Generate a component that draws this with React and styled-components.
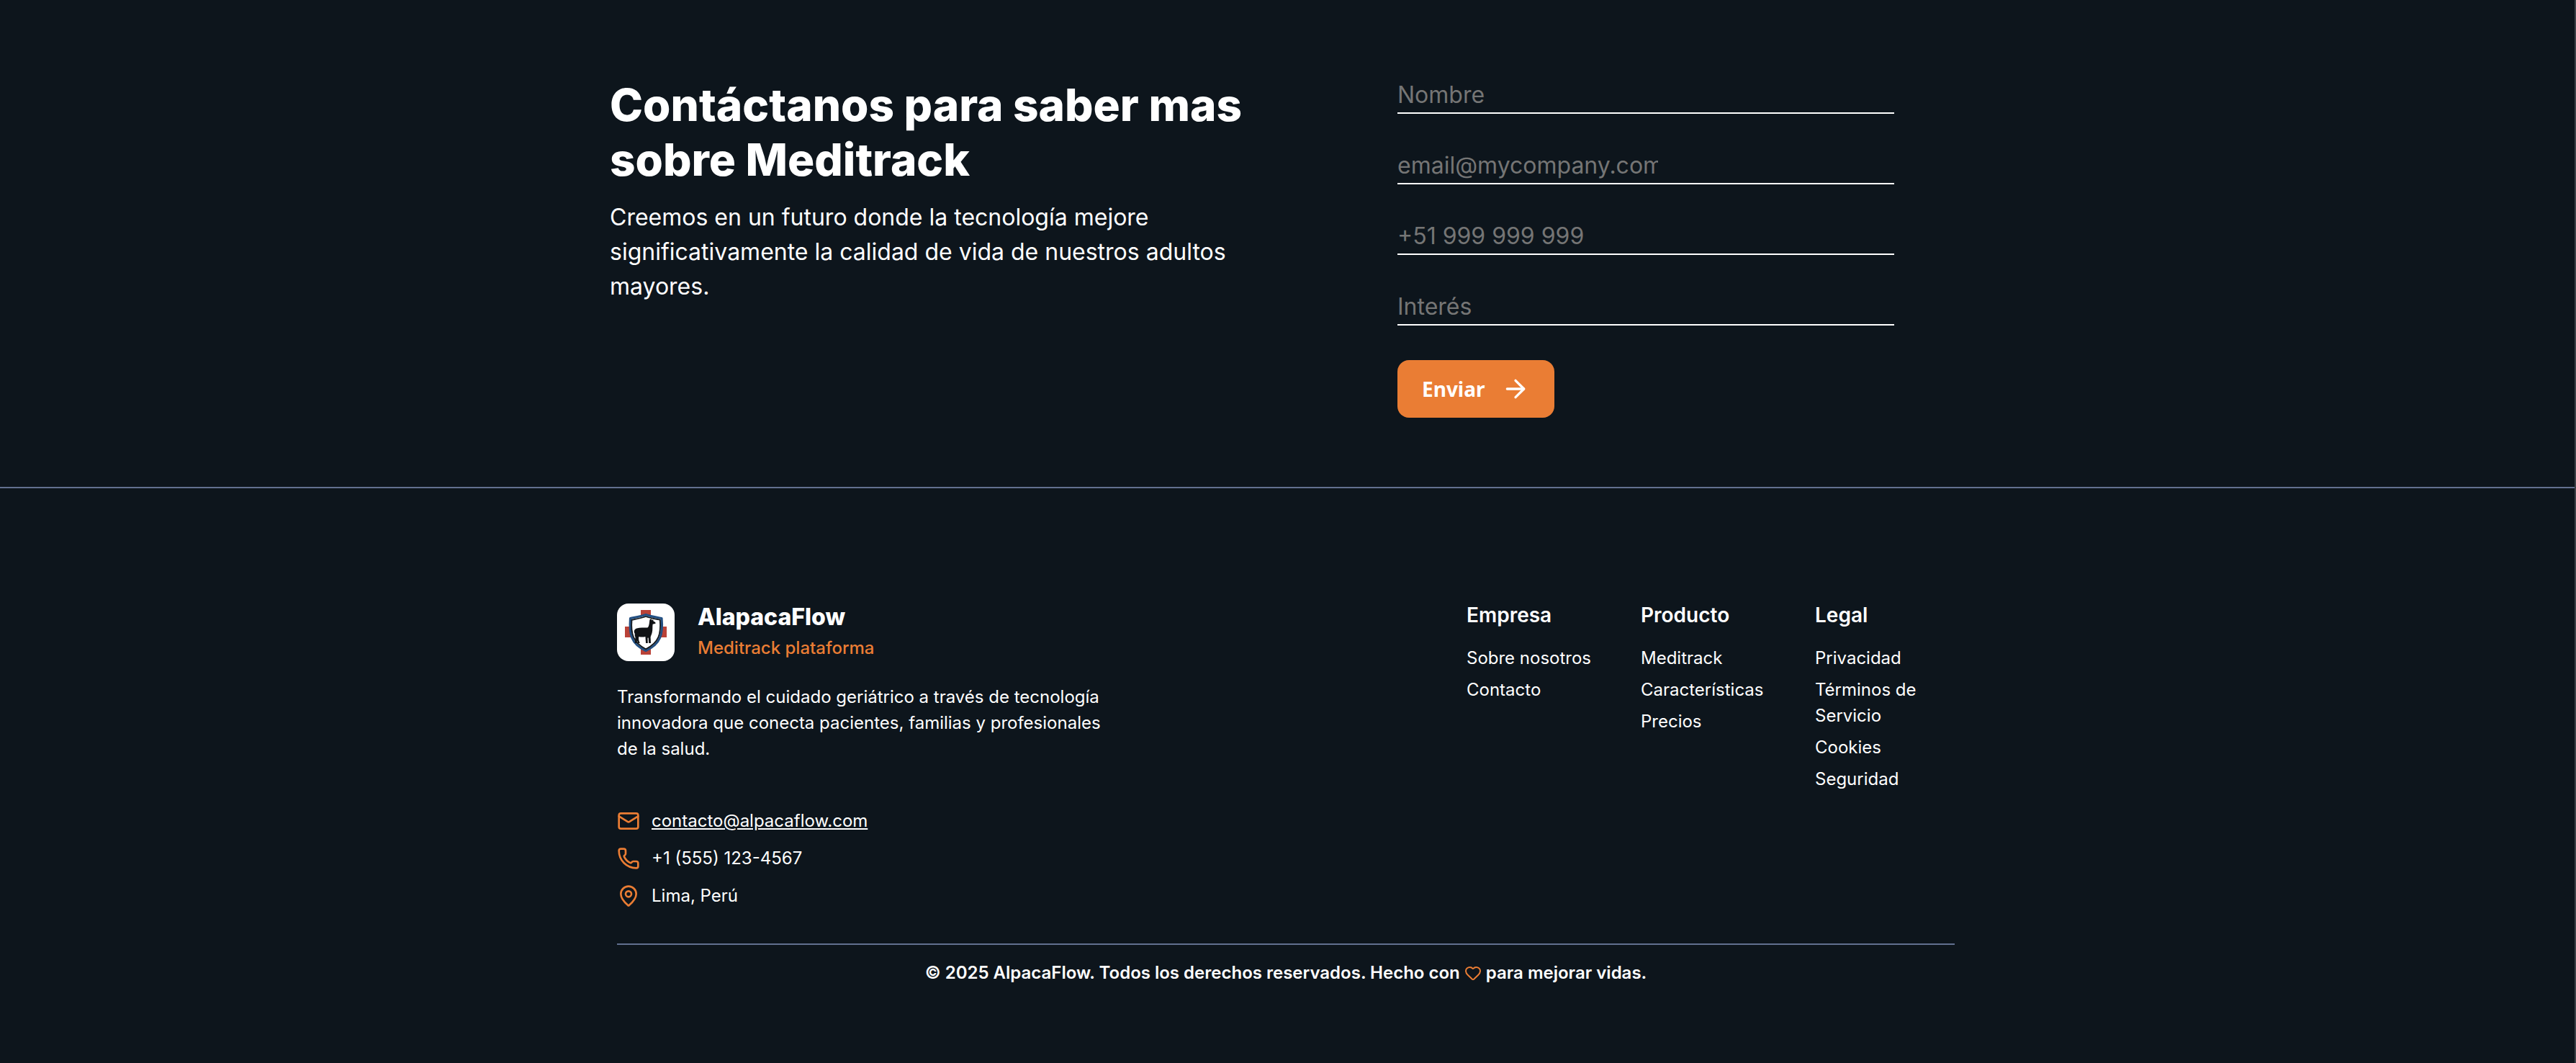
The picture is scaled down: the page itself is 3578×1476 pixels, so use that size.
import React from 'react';
import styled, { createGlobalStyle } from 'styled-components';
import { ArrowRight, Heart, Mail, MapPin, Phone } from 'lucide-react';

const color = {
  bg: '#0d151c',
  text: '#ffffff',
  accent: '#ea7d34',
  line: '#62708f',
  hint: '#757575',
  track: '#3d4248',
};

const GlobalStyle = createGlobalStyle`
  *, *::before, *::after { box-sizing: border-box; }
  body {
    margin: 0;
    background: ${color.bg};
    color: ${color.text};
    font-family: Inter, "Liberation Sans", sans-serif;
  }
`;

const Page = styled.div`
  min-height: 100vh;
  border-right: 2px solid ${color.track};
`;

const Contact = styled.section`
  display: flex;
  justify-content: center;
  gap: 184px;
  padding: 108px 98px 96px 0;
  border-bottom: 2px solid ${color.line};
`;

const Intro = styled.div`
  flex: 0 1 910px;
`;

const Title = styled.h1`
  margin: 0 0 18px;
  font-size: 62px;
  line-height: 76px;
  font-weight: 800;
`;

const Lead = styled.p`
  margin: 0;
  max-width: 880px;
  font-size: 32px;
  line-height: 48px;
`;

const Form = styled.form`
  flex: 0 1 690px;
  display: flex;
  flex-direction: column;
  align-items: flex-start;
  gap: 48px;
`;

const Field = styled.label`
  display: block;
  width: 100%;
  height: 50px;
  border-bottom: 2px solid ${color.text};
`;

const Input = styled.input`
  display: block;
  width: 362px;
  height: 48px;
  padding: 0;
  border: 0;
  outline: 0;
  background: transparent;
  color: ${color.text};
  font: 400 32px/48px Inter, "Liberation Sans", sans-serif;

  &::placeholder {
    color: ${color.hint};
    opacity: 1;
  }
`;

const Submit = styled.button`
  display: flex;
  align-items: center;
  gap: 22px;
  height: 80px;
  padding: 0 34px;
  border: 0;
  border-radius: 16px;
  background: ${color.accent};
  color: ${color.text};
  font: 700 28px/40px "Noto Sans", sans-serif;
  cursor: pointer;
`;

const Footer = styled.footer`
  display: flex;
  justify-content: center;
  padding: 160px 4px 96px 0;
`;

const FooterInner = styled.div`
  flex: 0 1 1858px;
`;

const FooterTop = styled.div`
  display: flex;
  justify-content: space-between;
  padding-bottom: 48px;
  border-bottom: 2px solid ${color.line};
`;

const Company = styled.div`
  width: 680px;
  font-size: 24px;
  line-height: 36px;
`;

const Brand = styled.div`
  display: flex;
  align-items: center;
  gap: 32px;
  margin-bottom: 32px;
`;

const BrandName = styled.h2`
  margin: 0 0 6px;
  font-size: 32px;
  line-height: 38px;
  font-weight: 800;
`;

const BrandTag = styled.p`
  margin: 0;
  color: ${color.accent};
  font-weight: 500;
`;

const About = styled.p`
  margin: 0 0 64px;
`;

const Contacts = styled.ul`
  display: flex;
  flex-direction: column;
  gap: 16px;
  margin: 0;
  padding: 0;
  list-style: none;
`;

const ContactItem = styled.li`
  display: flex;
  align-items: center;
  gap: 16px;

  svg { color: ${color.accent}; }
`;

const MailLink = styled.a`
  color: inherit;
`;

const Columns = styled.nav`
  display: grid;
  grid-template-columns: repeat(3, 194px);
  gap: 48px;
`;

const ColumnTitle = styled.h3`
  margin: 0 0 26px;
  font-size: 28px;
  line-height: 32px;
  font-weight: 600;
`;

const Links = styled.ul`
  display: flex;
  flex-direction: column;
  gap: 8px;
  margin: 0;
  padding: 0;
  list-style: none;
  font-size: 24px;
  line-height: 36px;
`;

const FooterLink = styled.a`
  color: inherit;
  text-decoration: none;
`;

const Copyright = styled.p`
  display: flex;
  justify-content: center;
  align-items: center;
  gap: 6px;
  margin: 0;
  padding-top: 21px;
  font-size: 24px;
  line-height: 36px;
  font-weight: 600;

  svg { color: ${color.accent}; }
`;

const fields = [
  { name: 'name', type: 'text', hint: 'Nombre' },
  { name: 'email', type: 'email', hint: 'email@mycompany.com' },
  { name: 'phone', type: 'tel', hint: '+51 999 999 999' },
  { name: 'interest', type: 'text', hint: 'Interés' },
];

const contacts = [
  { icon: Mail, text: 'contacto@alpacaflow.com', href: 'mailto:contacto@alpacaflow.com' },
  { icon: Phone, text: '+1 (555) 123-4567' },
  { icon: MapPin, text: 'Lima, Perú' },
];

const columns = [
  { title: 'Empresa', links: ['Sobre nosotros', 'Contacto'] },
  { title: 'Producto', links: ['Meditrack', 'Características', 'Precios'] },
  { title: 'Legal', links: ['Privacidad', 'Términos de Servicio', 'Cookies', 'Seguridad'] },
];

function Logo() {
  return (
    <svg width="80" height="80" viewBox="0 0 80 80" aria-hidden="true">
      <rect width="80" height="80" rx="16" fill="#fff" />
      <path d="M33 9h14v62H33zM11 32h58v15H11z" fill="#b94238" />
      <path
        d="M40 15.500c-7 2.500-14 3.500-21.500 5C17 42 19 56 40 65.500 61 56 64 42 62 20.500 54 19 47 18 40 15.500z"
        fill="#fff"
        stroke="#235083"
        strokeWidth="3.200"
        strokeLinejoin="round"
      />
      <path
        d="M40 18c-6.500 2.400-13 3.400-19.500 4.700C19 41.500 22 54 40 63.200 58.500 54 61.400 41.500 59.800 22.700 53 21.400 46.500 20.400 40 18z"
        fill="#fff"
        stroke="#11161b"
        strokeWidth="1.800"
        strokeLinejoin="round"
      />
      <path
        d="M47.500 21l1 2.500 1.500-1.500.6 2.600 2.600 1.400.4 1.800-4 1c-.6 4 .2 8-1 12-.4 2-1.600 4-2 6l.4 8.200h-2.800l-.6-7.500-1.100.2.300 7.300h-2.700l-.7-9c-3 .8-6.500.6-9 0-.9 2.500-.1 5.500 1.400 9h-2.500l-1.400-3.500-.7 3.500h-2.500l.8-8.500c-.9-1.500-1-3-.7-4.500-2-3-.8-6.500 2.500-7.500 5-1.300 10-.8 15-1 2-1.500 2.300-4 3.100-11l1.400-1z"
        fill="#101214"
      />
    </svg>
  );
}

export default function App() {
  return (
    <Page>
      <GlobalStyle />
      <main>
        <Contact>
          <Intro>
            <Title>Contáctanos para saber mas sobre Meditrack</Title>
            <Lead>
              Creemos en un futuro donde la tecnología mejore significativamente la calidad de vida
              de nuestros adultos mayores.
            </Lead>
          </Intro>
          <Form onSubmit={(event) => event.preventDefault()}>
            {fields.map(({ name, type, hint }) => (
              <Field key={name}>
                <Input name={name} type={type} placeholder={hint} aria-label={hint} />
              </Field>
            ))}
            <Submit type="submit">
              Enviar
              <ArrowRight size={40} aria-hidden="true" />
            </Submit>
          </Form>
        </Contact>
      </main>
      <Footer>
        <FooterInner>
          <FooterTop>
            <Company>
              <Brand>
                <Logo />
                <div>
                  <BrandName>AlapacaFlow</BrandName>
                  <BrandTag>Meditrack plataforma</BrandTag>
                </div>
              </Brand>
              <About>
                Transformando el cuidado geriátrico a través de tecnología innovadora que conecta
                pacientes, familias y profesionales de la salud.
              </About>
              <Contacts>
                {contacts.map(({ icon: Icon, text, href }) => (
                  <ContactItem key={text}>
                    <Icon size={32} aria-hidden="true" />
                    {href ? <MailLink href={href}>{text}</MailLink> : text}
                  </ContactItem>
                ))}
              </Contacts>
            </Company>
            <Columns>
              {columns.map(({ title, links }) => (
                <div key={title}>
                  <ColumnTitle>{title}</ColumnTitle>
                  <Links>
                    {links.map((link) => (
                      <li key={link}>
                        <FooterLink href="#">{link}</FooterLink>
                      </li>
                    ))}
                  </Links>
                </div>
              ))}
            </Columns>
          </FooterTop>
          <Copyright>
            © 2025 AlpacaFlow. Todos los derechos reservados. Hecho con
            <Heart size={24} aria-hidden="true" />
            para mejorar vidas.
          </Copyright>
        </FooterInner>
      </Footer>
    </Page>
  );
}
